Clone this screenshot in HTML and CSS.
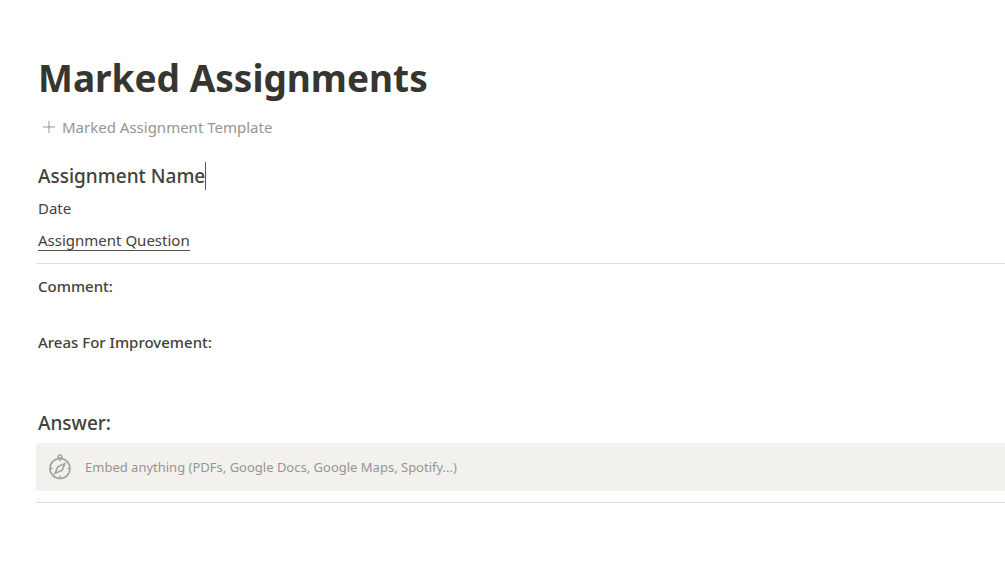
FILE: index.html
```html
<!DOCTYPE html>
<html lang="en">
<head>
<meta charset="utf-8">
<title>Marked Assignments</title>
<link rel="stylesheet" href="styles.css">
</head>
<body>
<main class="page">
  <h1 class="title">Marked Assignments</h1>
  <button class="template-button" type="button">
    <svg class="plus" viewBox="0 0 12 12" aria-hidden="true"><path d="M6 0v12M0 6h12"/></svg>
    <span>Marked Assignment Template</span>
  </button>
  <h2 class="heading heading-name">Assignment Name<span class="caret"></span></h2>
  <p class="text">Date</p>
  <p class="text"><span class="underlined">Assignment Question</span></p>
  <hr class="divider">
  <p class="label">Comment:</p>
  <p class="label label-areas">Areas For Improvement:</p>
  <h2 class="heading heading-answer">Answer:</h2>
  <button class="embed" type="button">
    <svg class="compass" viewBox="0 0 24 28" aria-hidden="true">
      <circle cx="12" cy="15.5" r="10"/>
      <circle cx="12" cy="3.8" r="1.8"/>
      <path d="M17 10.5l-2.8 6.6-7.2 3.4 2.8-6.6z"/>
      <path d="M12 5.5v2.8M12 22.7v2.8M2 15.5h2.6M19.4 15.5H22"/>
    </svg>
    <span>Embed anything (PDFs, Google Docs, Google Maps, Spotify...)</span>
  </button>
  <hr class="divider divider-end">
</main>
</body>
</html>
```
FILE: styles.css
```css
* { box-sizing: border-box; }
body {
  margin: 0;
  background: #fff;
  color: #43413c;
  font-family: "Noto Sans", "Open Sans", sans-serif;
  overflow-x: hidden;
}
.page { padding: 53px 0 60px 36px; }
h1, h2, p { margin: 0; padding-left: 2px; }
.title { color: #37352f; font-size: 37px; line-height: 50px; font-weight: 700; }
.template-button {
  display: flex;
  align-items: center;
  gap: 7px;
  margin-top: 12px;
  padding: 0 0 0 7px;
  border: 0;
  background: none;
  color: #969592;
  font: 15px/24px "Noto Sans", "Open Sans", sans-serif;
}
.plus { width: 12px; height: 12px; fill: none; stroke: #969592; }
.heading { font-size: 19px; line-height: 28px; font-weight: 500; }
.heading-name { display: flex; align-items: center; margin-top: 23px; }
.caret { width: 1px; height: 28px; background: #55534e; }
.text { margin-top: 8px; font-size: 15px; line-height: 24px; }
.heading-name + .text { margin-top: 6px; }
.underlined { border-bottom: 1px solid #55534e; }
.divider { margin: 11px 0 0; border: 0; border-top: 1px solid #dededc; }
.label { margin-top: 10px; font-size: 15px; line-height: 24px; font-weight: 500; }
.label-areas { margin-top: 32px; }
.heading-answer { margin-top: 55px; }
.embed {
  display: flex;
  align-items: center;
  gap: 13px;
  width: 100%;
  height: 48px;
  margin-top: 6px;
  padding: 0 12px;
  border: 0;
  border-radius: 3px 0 0 3px;
  background: #f2f1ee;
  color: #969592;
  font: 13px/20px "Noto Sans", "Open Sans", sans-serif;
}
.compass { width: 24px; height: 28px; fill: none; stroke: #a3a29f; stroke-width: 1.6; }
.divider-end { margin-top: 11px; }
```
